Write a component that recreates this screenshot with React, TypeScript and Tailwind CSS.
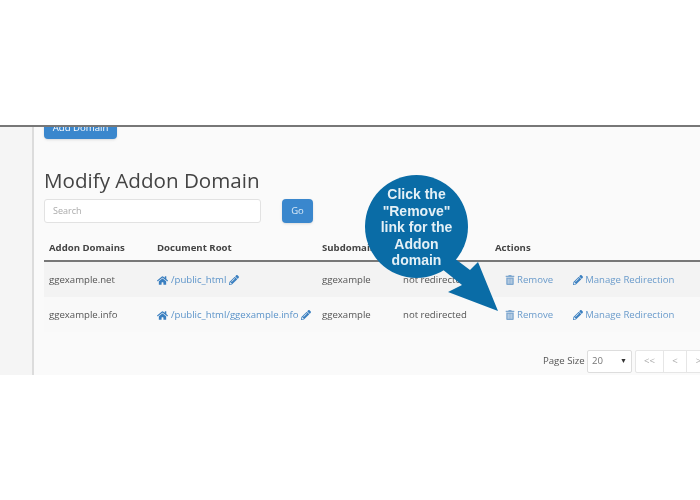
import React from 'react';
import { FaHome, FaPencilAlt, FaTrashAlt } from 'react-icons/fa';

const rows = [
  { domain: 'ggexample.net', root: '/public_html', bg: 'bg-[#f3f3f3]' },
  { domain: 'ggexample.info', root: '/public_html/ggexample.info', bg: 'bg-[#f9f9f9]' },
];

const cols = 'grid grid-cols-[108px_165px_81px_92px_1fr] pl-[5px]';

const Callout = () => (
  <div className="absolute left-[365px] top-[48px] w-[140px] h-[140px]">
    <svg className="absolute left-0 top-0" width="140" height="140" viewBox="0 0 140 140">
      <circle cx="51.5" cy="51.5" r="51.5" fill="#0a6ca6" />
      <polygon points="85,80 105,95 113,87 133,136 83,117 97,110 72,90" fill="#0a6ca6" />
    </svg>
    <div className="absolute left-0 top-[11px] w-[103px] text-center text-[14px] leading-[16.5px] font-bold text-[#e4f0f6] font-['Liberation_Sans',sans-serif]">
      Click the
      <br />
      "Remove"
      <br />
      link for the
      <br />
      Addon
      <br />
      domain
    </div>
  </div>
);

export default function App() {
  return (
    <div className="w-[700px] h-[500px] overflow-hidden bg-white font-['Open_Sans',sans-serif] text-[9.6px] text-[#555]">
      <div className="h-[125px]" />
      <div className="relative h-[250px] overflow-hidden border-t-2 border-[#777] flex bg-[#fafafa] blur-[0.5px]">
        <div className="w-[34px] shrink-0 bg-[#f5f5f5] border-r-2 border-[#dcdcdc]" />
        <div className="flex-1 pl-[10px] min-w-0">
          <button className="block -mt-[14px] w-[73px] h-[26px] pt-[4px] rounded-sm bg-[#3a87cd] text-white text-[9.6px] shadow-sm">
            Add Domain
          </button>
          <h1 className="mt-[26px] text-[20.6px] leading-[30px] text-[#444]">Modify Addon Domain</h1>
          <div className="mt-[4px] flex items-center gap-[21px]">
            <div className="w-[217px] h-[24px] rounded-[3px] border border-[#e2e2e2] bg-white pl-[8px] flex items-center text-[#aaa] text-[9px]">
              Search
            </div>
            <button className="w-[31px] h-[24px] rounded-sm bg-[#3a87cd] text-[#dcebf7] text-[9.5px] shadow-sm">Go</button>
          </div>
          <div className="mt-[14px] w-[680px]">
            <div className={`${cols} h-[25px] items-center font-bold text-[#444] border-b-2 border-[#777]`}>
              <div>Addon Domains</div>
              <div>Document Root</div>
              <div>Subdomain</div>
              <div />
              <div>Actions</div>
            </div>
            {rows.map((row) => (
              <div key={row.domain} className={`${cols} h-[35px] pt-[2px] items-center ${row.bg}`}>
                <div>{row.domain}</div>
                <div className="flex items-center gap-[3px] text-[#5b93c9]">
                  <FaHome className="text-[11px] text-[#3a7fc0]" />
                  <span>{row.root}</span>
                  <FaPencilAlt className="text-[10px] text-[#3a7fc0]" />
                </div>
                <div>ggexample</div>
                <div>not redirected</div>
                <div className="flex items-center pl-[10px] text-[#6a9bcb]">
                  <FaTrashAlt className="text-[10px] text-[#7fa8d0]" />
                  <span className="ml-[2px]">Remove</span>
                  <FaPencilAlt className="ml-[20px] text-[10px] text-[#3a7fc0]" />
                  <span className="ml-[2px]">Manage Redirection</span>
                </div>
              </div>
            ))}
          </div>
          <div className="mt-[18px] flex items-center pl-[499px] w-[680px]">
            <span className="w-[44px] shrink-0 whitespace-nowrap">Page Size</span>
            <div className="w-[45px] h-[23px] shrink-0 rounded-[2px] border border-[#ddd] bg-white flex items-center justify-between px-[4px] text-[#777]">
              <span>20</span>
              <span className="text-[7px] text-[#333]">▼</span>
            </div>
            <div className="ml-[3px] flex h-[23px] shrink-0 text-[#aaa] bg-white border border-[#e6e6e6] rounded-[2px]">
              <div className="w-[28px] flex items-center justify-center border-r border-[#e6e6e6]">&lt;&lt;</div>
              <div className="w-[23px] flex items-center justify-center border-r border-[#e6e6e6]">&lt;</div>
              <div className="w-[23px] flex items-center justify-center">&gt;</div>
            </div>
          </div>
        </div>
        <Callout />
      </div>
    </div>
  );
}
